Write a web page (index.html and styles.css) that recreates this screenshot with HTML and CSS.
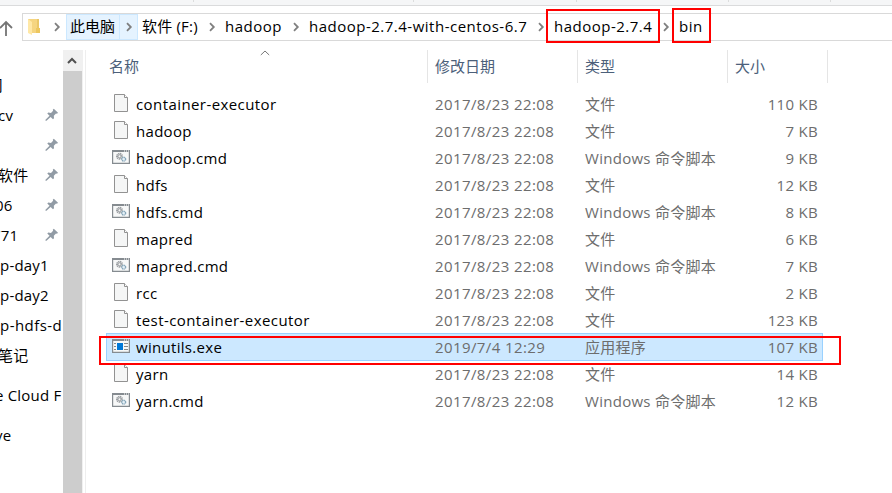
FILE: index.html
```
<!DOCTYPE html>
<html lang="zh-CN">
<head>
<meta charset="utf-8">
<title>bin</title>
<link rel="stylesheet" href="styles.css">
</head>
<body>
<svg class="defs" width="0" height="0">
  <symbol id="file" viewBox="0 0 18 20"><path d="M2.5 2.5H12.5L15.5 5.5V19.5H2.5Z" fill="#f5f6f6" stroke="#929292"/><path d="M12.5 2.5V5.5H15.5" fill="#fff" stroke="#929292"/></symbol>
  <symbol id="cmd" viewBox="0 0 18 20"><path d="M.6 4.6H17.4V17.4H.6Z" fill="#f7f8f8" stroke="#858b90" stroke-width="1.2"/><path d="M0 4H18V6H0Z" fill="#858b90"/><path d="M12 5h1M14 5h1M16 5h1" stroke="#fff"/><circle cx="7.5" cy="10.3" r="2.5" fill="none" stroke="#9b9fa3" stroke-width="2" stroke-dasharray="1.2 .5"/><circle cx="7.5" cy="10.3" r="1.4" fill="none" stroke="#8b8f93" stroke-width=".7"/><circle cx="11.7" cy="13.2" r="1.9" fill="#e6f1f8" stroke="#86a6b9" stroke-width="1.4" stroke-dasharray="1.2 .4"/></symbol>
  <symbol id="exe" viewBox="0 0 18 20"><path d="M.6 4.6H17.4V17.4H.6Z" fill="#f7f8f8" stroke="#858b90" stroke-width="1.2"/><path d="M0 4H18V6H0Z" fill="#858b90"/><path d="M12 5h1M14 5h1M16 5h1" stroke="#fff"/><path d="M5 8h6v7H5Z" fill="#0078d7"/><path d="M2 8.5h2M2 11.5h2M2 14.5h2M12 8.5h4M12 11.5h4M12 14.5h4" stroke="#888"/></symbol>
  <symbol id="pin" viewBox="0 0 14 14"><path d="M8.8.8 13 4.8 12 5.8 11 5.5 8.8 7.8 9 10.3 8 11.2 5.6 8.9 1.5 12.8H.5V11.8L4.5 7.8 2.3 5.6 3.3 4.6 6 4.9 8.1 2.8 7.8 1.8Z" fill="#919ba5"/></symbol>
  <symbol id="chev" viewBox="0 0 8 10"><path d="M2 1.2 5.8 5 2 8.8" fill="none" stroke="#808080" stroke-width="1.8"/></symbol>
</svg>
<div class="window">
  <div class="ribbon"><i class="tick"></i><i class="tick"></i><i class="tick"></i><i class="tick"></i><i class="tick"></i></div>
  <div class="nav">
    <svg class="up" viewBox="0 0 14 18"><path d="M6 17V3M0 9 6 3 12 9" fill="none" stroke="#747474" stroke-width="1.8"/></svg>
    <div class="address">
      <svg class="folder" viewBox="0 0 14 18"><path d="M1 1H10V15H1Z" fill="#f5d581"/><path d="M9 10H13V15H9Z" fill="#edc75f"/><path d="M10 1H12V10H10Z" fill="#eac768"/><path d="M1 1 5 4V17L1 15Z" fill="#ffe8a6"/></svg>
      <svg class="chev first"><use href="#chev"/></svg>
      <span class="crumb pc">此电脑</span><span class="drop"><svg class="chev"><use href="#chev"/></svg></span>
      <span class="crumb drive">软件 (F:)</span><svg class="chev"><use href="#chev"/></svg>
      <span class="crumb root">hadoop</span><svg class="chev"><use href="#chev"/></svg>
      <span class="crumb dist">hadoop-2.7.4-with-centos-6.7</span><svg class="chev"><use href="#chev"/></svg>
      <span class="crumb version marked">hadoop-2.7.4</span><svg class="chev"><use href="#chev"/></svg>
      <span class="crumb bin marked">bin</span>
    </div>
  </div>
  <div class="main">
    <div class="sidebar">
      <div class="side"><span class="cut-xl">司</span></div>
      <div class="side"><span class="cut-s">cv</span><svg><use href="#pin"/></svg></div>
      <div class="side"><span></span><svg><use href="#pin"/></svg></div>
      <div class="side"><span class="cut-s">软件</span><svg><use href="#pin"/></svg></div>
      <div class="side"><span class="cut-m">06</span><svg><use href="#pin"/></svg></div>
      <div class="side"><span class="cut-l">771</span><svg><use href="#pin"/></svg></div>
      <div class="side"><span>p-day1</span></div>
      <div class="side"><span>p-day2</span></div>
      <div class="side"><span class="wide">p-hdfs-d</span></div>
      <div class="side"><span class="cut-s">笔记</span></div>
      <div class="side group"><span class="cut-m">e Cloud F</span></div>
      <div class="side group"><span class="cut-m">ve</span></div>
    </div>
    <div class="scroll"><svg class="arrow" viewBox="0 0 10 8"><path d="M1 6 5 2 9 6" fill="none" stroke="#505050" stroke-width="2"/></svg><div class="thumb"></div></div>
    <div class="files">
      <div class="head"><span>名称</span><span>修改日期</span><span>类型</span><span>大小</span><svg class="sort" viewBox="0 0 10 6"><path d="M.8 5 5 1 9.2 5" fill="none" stroke="#777"/></svg></div>
      <div class="row"><svg><use href="#file"/></svg><span class="name">container-executor</span><span class="date">2017/8/23 22:08</span><span class="type">文件</span><span class="size">110 KB</span></div>
      <div class="row"><svg><use href="#file"/></svg><span class="name">hadoop</span><span class="date">2017/8/23 22:08</span><span class="type">文件</span><span class="size">7 KB</span></div>
      <div class="row"><svg><use href="#cmd"/></svg><span class="name">hadoop.cmd</span><span class="date">2017/8/23 22:08</span><span class="type">Windows 命令脚本</span><span class="size">9 KB</span></div>
      <div class="row"><svg><use href="#file"/></svg><span class="name">hdfs</span><span class="date">2017/8/23 22:08</span><span class="type">文件</span><span class="size">12 KB</span></div>
      <div class="row"><svg><use href="#cmd"/></svg><span class="name">hdfs.cmd</span><span class="date">2017/8/23 22:08</span><span class="type">Windows 命令脚本</span><span class="size">8 KB</span></div>
      <div class="row"><svg><use href="#file"/></svg><span class="name">mapred</span><span class="date">2017/8/23 22:08</span><span class="type">文件</span><span class="size">6 KB</span></div>
      <div class="row"><svg><use href="#cmd"/></svg><span class="name">mapred.cmd</span><span class="date">2017/8/23 22:08</span><span class="type">Windows 命令脚本</span><span class="size">7 KB</span></div>
      <div class="row"><svg><use href="#file"/></svg><span class="name">rcc</span><span class="date">2017/8/23 22:08</span><span class="type">文件</span><span class="size">2 KB</span></div>
      <div class="row"><svg><use href="#file"/></svg><span class="name long">test-container-executor</span><span class="date">2017/8/23 22:08</span><span class="type">文件</span><span class="size">123 KB</span></div>
      <div class="row selected"><svg><use href="#exe"/></svg><span class="name">winutils.exe</span><span class="date">2019/7/4 12:29</span><span class="type">应用程序</span><span class="size">107 KB</span></div>
      <div class="row"><svg><use href="#file"/></svg><span class="name">yarn</span><span class="date">2017/8/23 22:08</span><span class="type">文件</span><span class="size">14 KB</span></div>
      <div class="row"><svg><use href="#cmd"/></svg><span class="name">yarn.cmd</span><span class="date">2017/8/23 22:08</span><span class="type">Windows 命令脚本</span><span class="size">12 KB</span></div>
    </div>
  </div>
</div>
</body>
</html>
```
FILE: styles.css
```
*, *::after { box-sizing: border-box; }
body { margin: 0; background: #fff; color: #000; font: 15px/20px "Open Sans", "Noto Sans CJK SC", sans-serif; white-space: nowrap; }
.defs { position: absolute; }
svg { display: block; flex: none; }
.window { width: 892px; height: 493px; overflow: hidden; display: flex; flex-direction: column; }
.ribbon { height: 6px; flex: none; background: #f5f6f7; border-bottom: 1px solid #dadbdc; display: grid; grid-template-columns: 194px 220px 163px 152px 102px; }
.tick { height: 2px; border-right: 1px solid #dcdddd; }
.nav { height: 44px; flex: none; display: flex; padding-top: 7px; }
.up { width: 14px; height: 18px; margin-top: 6px; }
.address { flex: 1; height: 28px; margin-left: 8px; border: 1px solid #d9d9d9; border-right: 0; display: flex; align-items: center; }
.folder { width: 14px; height: 18px; margin-left: 4px; }
.chev { width: 8px; height: 10px; }
.first { margin: 0 5px 0 12px; }
.crumb { line-height: 22px; padding-bottom: 2px; letter-spacing: .5px; }
.pc { width: 54px; height: 26px; padding-left: 3px; background: #e5f3ff; border: 1px solid #cce8ff; letter-spacing: 0; }
.drop { width: 18px; height: 26px; padding-left: 5px; display: flex; align-items: center; background: #e5f3ff; border: 1px solid #cce8ff; border-left: 0; }
.drive { width: 70px; padding-left: 4px; letter-spacing: .2px; }
.root { width: 76px; padding-left: 9px; }
.dist { width: 237px; padding-left: 9px; }
.version { width: 117px; padding-left: 9px; }
.bin { padding-left: 9px; }
.marked { position: relative; }
.marked::after { content: ""; position: absolute; border: 2px solid #f00; }
.version::after { left: 1px; top: -6px; width: 114px; height: 34px; }
.bin::after { left: 2px; top: -7px; width: 39px; height: 35px; }
.main { flex: 1; display: flex; min-height: 0; }
.sidebar { width: 63px; padding-top: 20px; overflow: hidden; letter-spacing: .2px; }
.side { height: 30px; display: flex; align-items: center; justify-content: space-between; }
.side svg { width: 14px; height: 14px; margin-right: 4px; }
.group { margin-top: 10px; }
.wide { letter-spacing: .45px; }
.cut-s { margin-left: -2px; }
.cut-m { margin-left: -5px; }
.cut-l { margin-left: -8px; }
.cut-xl { margin-left: -12px; }
.scroll { width: 23px; background: #f0f0f0; border-right: 1px solid #eee; box-shadow: inset -2px 0 #fff; }
.arrow { width: 10px; height: 8px; margin: 7px 0 6px 4px; }
.thumb { width: 19px; height: 430px; background: #cdcdcd; }
.files { width: 742px; }
.head { height: 32px; margin-bottom: 8px; display: grid; grid-template-columns: 342px 150px 150px 100px; color: #4c607a; position: relative; }
.head span { padding-left: 7px; line-height: 33px; border-right: 1px solid #e5e5e5; }
.head span:first-child { padding-left: 23px; }
.sort { position: absolute; left: 174px; top: 0; width: 10px; height: 6px; }
.row { height: 27px; margin-left: 20px; width: 717px; display: grid; grid-template-columns: 24px 299px 150px 130px 103px; align-items: center; padding-left: 6px; color: #6d6d6d; position: relative; }
.row svg { width: 18px; height: 20px; margin-bottom: 3px; }
.name { color: #000; letter-spacing: .3px; }
.name.long, .row:nth-child(2) .name { letter-spacing: .42px; }
.date { letter-spacing: .4px; }
.type { letter-spacing: .28px; }
.size { text-align: right; letter-spacing: .3px; }
.selected { background: #cce8ff; box-shadow: inset 0 0 0 1px #99d1ff; height: 28px; padding-bottom: 1px; margin-bottom: -1px; }
.selected::after { content: ""; position: absolute; left: -7px; top: 3px; width: 742px; height: 29px; border: 2px solid #f00; z-index: 1; }
```
